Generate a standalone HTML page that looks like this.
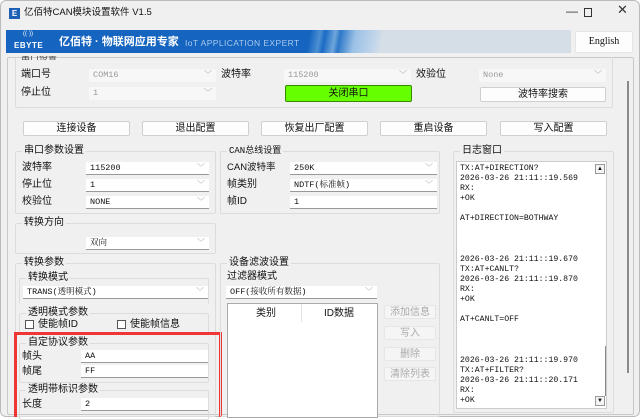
<!DOCTYPE html><html><head><meta charset="utf-8"><style>
*{box-sizing:border-box;margin:0;padding:0}
body{width:640px;height:417px;background:#fff;font-family:"Liberation Sans","Noto Sans CJK SC",sans-serif;font-size:10px;line-height:12px;color:#111;position:relative;overflow:hidden}
.a{position:absolute;white-space:nowrap;line-height:12px}
.win{position:absolute;left:0;top:0;width:640px;height:417px;background:#f0f0f0;border:1px solid #bbb;border-radius:6px}
.g{position:absolute;border:1px solid #dcdcdc;border-radius:2px}
.gt{position:absolute;top:-7px;left:6px;background:#f0f0f0;padding:0 2px;font-size:10px;line-height:12px}
.cb{position:absolute;background:#fff;border-bottom:1px solid #999;height:13px;font-family:"Liberation Mono","Noto Serif CJK SC",monospace;font-size:8.5px;line-height:13px;padding-left:4px}
.cb.dis{background:#f7f7f7;color:#999;border-bottom:none}
.cb .v{position:absolute;right:4px;top:0;color:#888;font-size:8px}
.bt{position:absolute;background:#fdfdfd;border:1px solid #d0d0d0;border-radius:2px;text-align:center;font-size:10px;line-height:13px}
.bt.dis{background:#f5f5f5;color:#aaa;border-color:#e6e6e6}
pre{font-family:"Liberation Mono","Noto Serif CJK SC",monospace;font-size:8.2px;line-height:10.1px}
</style></head><body><div class="win">
<div class="a" style="left:8px;top:7px;width:11px;height:11px;background:#1c5fb5;color:#fff;font-size:8px;line-height:11px;text-align:center;font-weight:bold">E</div>
<div class="a" style="left:23px;top:6px;font-size:9.5px">亿佰特CAN模块设置软件 V1.5</div>
<div class="a" style="left:565px;top:4px;font-size:12px;color:#333">—</div>
<div class="a" style="left:583px;top:7px;width:8px;height:9px;border:1px solid #333"></div>
<div class="a" style="left:616px;top:3px;font-size:13px;color:#333">✕</div>
<div class="a" style="left:5px;top:29px;width:565px;height:23px;background:linear-gradient(100deg,#1565c0 0,#1565c0 300px,#4d8fd2 310px,#1a6bc4 315px,#6fa6db 325px,#2d78c8 330px,#9cc1e6 345px,#c2d6ea 365px,#d5dee7 372px,#d5dee7 100%)"></div>
<div class="a" style="left:22px;top:29px;color:#fff;font-size:6px;line-height:8px">((·))</div>
<div class="a" style="left:13px;top:40px;color:#fff;font-size:8px;line-height:10px;font-weight:bold;letter-spacing:.5px">EBYTE</div>
<div class="a" style="left:58px;top:34px;color:#fff;font-size:11px;font-weight:bold;line-height:14px">亿佰特 · 物联网应用专家</div>
<div class="a" style="left:184px;top:36px;color:#a9c8ec;font-size:8.5px;letter-spacing:.4px">IoT APPLICATION EXPERT</div>
<div class="bt" style="left:574px;top:30px;width:58px;height:22px;line-height:20px;font-family:'Liberation Serif',serif;font-size:10px;border-color:#e5e5e5">English</div>
<div class="g" style="left:6px;top:56px;width:627px;height:358px;border-color:#c8c8c8"></div>
<div class="a" style="left:626px;top:80px;width:2px;height:292px;background:#8a8a8a"></div>
<div class="g" style="left:14px;top:56px;width:598px;height:51px;border-top:none"></div>
<div class="a" style="left:20px;top:55px;font-size:9px;height:4px;overflow:hidden;line-height:4px;color:#444">串口设置</div>
<div class="a" style="left:20px;top:68px">端口号</div>
<div class="cb dis" style="left:88px;top:68px;width:127px">COM16<span class="v">﹀</span></div>
<div class="a" style="left:220px;top:68px">波特率</div>
<div class="cb dis" style="left:283px;top:68px;width:127px">115200<span class="v">﹀</span></div>
<div class="a" style="left:415px;top:68px">效验位</div>
<div class="cb dis" style="left:478px;top:68px;width:127px">None<span class="v">﹀</span></div>
<div class="a" style="left:20px;top:86px">停止位</div>
<div class="cb dis" style="left:88px;top:86px;width:127px">1<span class="v">﹀</span></div>
<div class="bt" style="left:284px;top:84px;width:127px;height:17px;line-height:15px;background:#66ff00;border-color:#3a8a00">关闭串口</div>
<div class="bt" style="left:479px;top:86px;width:126px;height:15px">波特率搜索</div>
<div class="bt" style="left:22px;top:120px;width:107px;height:15px">连接设备</div>
<div class="bt" style="left:141px;top:120px;width:107px;height:15px">退出配置</div>
<div class="bt" style="left:260px;top:120px;width:107px;height:15px">恢复出厂配置</div>
<div class="bt" style="left:379px;top:120px;width:107px;height:15px">重启设备</div>
<div class="bt" style="left:499px;top:120px;width:107px;height:15px">写入配置</div>

<div class="g" style="left:14px;top:150px;width:201px;height:63px"><span class="gt">串口参数设置</span></div>
<div class="a" style="left:21px;top:161px">波特率</div><div class="cb" style="left:85px;top:161px;width:123px">115200<span class="v">﹀</span></div>
<div class="a" style="left:21px;top:178px">停止位</div><div class="cb" style="left:85px;top:178px;width:123px">1<span class="v">﹀</span></div>
<div class="a" style="left:21px;top:195px">校验位</div><div class="cb" style="left:85px;top:195px;width:123px">NONE<span class="v">﹀</span></div>
<div class="g" style="left:219px;top:150px;width:220px;height:63px"><span class="gt" style="font-family:'Liberation Mono','Noto Sans CJK SC',monospace;font-size:9px">CAN总线设置</span></div>
<div class="a" style="left:226px;top:161px;font-size:9.5px">CAN波特率</div><div class="cb" style="left:289px;top:161px;width:147px">250K<span class="v">﹀</span></div>
<div class="a" style="left:226px;top:178px">帧类别</div><div class="cb" style="left:289px;top:178px;width:147px">NDTF(标准帧)<span class="v">﹀</span></div>
<div class="a" style="left:226px;top:195px">帧ID</div><div class="cb" style="left:289px;top:195px;width:147px">1</div>
<div class="g" style="left:14px;top:222px;width:201px;height:31px"><span class="gt">转换方向</span></div>
<div class="cb" style="left:85px;top:236px;width:123px">双向<span class="v">﹀</span></div>
<div class="g" style="left:14px;top:262px;width:201px;height:154px"><span class="gt">转换参数</span></div>
<div class="g" style="left:18px;top:277px;width:190px;height:26px;border-bottom:none"><span class="gt">转换模式</span></div>
<div class="cb" style="left:22px;top:285px;width:185px">TRANS(透明模式)<span class="v">﹀</span></div>
<div class="g" style="left:18px;top:312px;width:190px;height:22px;border-bottom:none"><span class="gt">透明模式参数</span></div>
<div class="a" style="left:24px;top:319px;width:9px;height:9px;border:1px solid #555;background:#fff"></div><div class="a" style="left:37px;top:318px">使能帧ID</div>
<div class="a" style="left:116px;top:319px;width:9px;height:9px;border:1px solid #555;background:#fff"></div><div class="a" style="left:129px;top:318px">使能帧信息</div>
<div class="g" style="left:18px;top:342px;width:190px;height:40px"><span class="gt">自定协议参数</span></div>
<div class="a" style="left:21px;top:350px">帧头</div><div class="cb" style="left:80px;top:349px;width:127px">AA</div>
<div class="a" style="left:21px;top:365px">帧尾</div><div class="cb" style="left:80px;top:364px;width:127px">FF</div>
<div class="g" style="left:18px;top:389px;width:190px;height:30px"><span class="gt">透明带标识参数</span></div>
<div class="a" style="left:21px;top:398px">长度</div><div class="cb" style="left:80px;top:397px;width:127px">2</div>
<div class="a" style="left:13px;top:331px;width:208px;height:85px;border:3px solid #f03535;border-bottom:none"></div>

<div class="g" style="left:219px;top:262px;width:220px;height:154px"><span class="gt">设备滤波设置</span></div>
<div class="a" style="left:226px;top:270px">过滤器模式</div>
<div class="cb" style="left:225px;top:285px;width:151px">OFF(接收所有数据)<span class="v">﹀</span></div>
<div class="a" style="left:226px;top:302px;width:151px;height:115px;background:#fff;border:1px solid #aaa"></div>
<div class="a" style="left:300px;top:303px;width:1px;height:18px;background:#e2e2e2"></div>
<div class="a" style="left:255px;top:307px">类别</div><div class="a" style="left:323px;top:307px">ID数据</div>
<div class="bt dis" style="left:383px;top:304px;width:52px;height:14px">添加信息</div>
<div class="bt dis" style="left:383px;top:325px;width:52px;height:14px">写入</div>
<div class="bt dis" style="left:383px;top:346px;width:52px;height:14px">删除</div>
<div class="bt dis" style="left:383px;top:366px;width:52px;height:14px">清除列表</div>

<div class="g" style="left:452px;top:150px;width:161px;height:262px"><span class="gt">日志窗口</span></div>
<div class="a" style="left:455px;top:160px;width:151px;height:248px;background:#fff;border:1px solid #ccc;overflow:hidden;line-height:normal"><pre style="padding:2px 0 0 3px">TX:AT+DIRECTION?
2026-03-26 21:11::19.569
RX:
+OK

AT+DIRECTION=BOTHWAY



2026-03-26 21:11::19.670
TX:AT+CANLT?
2026-03-26 21:11::19.870
RX:
+OK

AT+CANLT=OFF



2026-03-26 21:11::19.970
TX:AT+FILTER?
2026-03-26 21:11::20.171
RX:
+OK</pre></div>
<div class="a" style="left:594px;top:163px;width:10px;height:10px;border:1px solid #999;background:#f4f4f4;font-size:6px;text-align:center;line-height:9px">▲</div>
<div class="a" style="left:604px;top:345px;width:1px;height:50px;background:#888"></div>
<div class="a" style="left:594px;top:395px;width:10px;height:10px;border:1px solid #999;background:#f4f4f4;font-size:6px;text-align:center;line-height:9px">▼</div>
</div></body></html>
